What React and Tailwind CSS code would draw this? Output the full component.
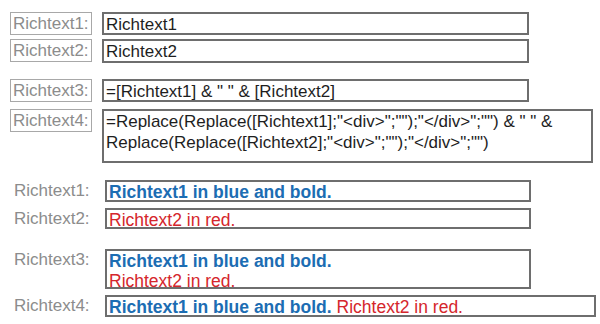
import React from 'react';

const font = { fontFamily: '"Liberation Sans", Arial, sans-serif' };

const TopRow = ({ label, children, fieldClass = 'w-[427px] h-[23px]', className = '' }) => (
  <div className={`flex items-start ${className}`}>
    <div className="w-[82px] h-[23px] border border-[#a8a8a8] text-[#8c8c8c] text-[17px] leading-[21px] pl-[2px] whitespace-nowrap">
      {label}
    </div>
    <div className={`ml-[10px] border-2 border-[#6e6e6e] text-[#1e1e1e] text-[17px] leading-[21px] pl-[2px] whitespace-nowrap ${fieldClass}`}>
      {children}
    </div>
  </div>
);

const BottomRow = ({ label, children, fieldClass = 'w-[426px] h-[22px]', className = '' }) => (
  <div className={`flex items-start ${className}`}>
    <div className="w-[95px] pl-[4px] text-[#8c8c8c] text-[17px] leading-[21px] whitespace-nowrap">{label}</div>
    <div className={`border-2 border-[#6e6e6e] text-[17.5px] leading-[20px] pl-[2px] whitespace-nowrap ${fieldClass}`}>
      {children}
    </div>
  </div>
);

const Blue = ({ children }) => <span className="font-bold text-[#1c6db3]">{children}</span>;
const Red = ({ children }) => <span className="text-[#d5262c]">{children}</span>;

export default function App() {
  return (
    <div className="w-[600px] h-[324px] bg-white pt-[12px] pl-[10px] overflow-hidden" style={font}>
      <TopRow label="Richtext1:">Richtext1</TopRow>
      <TopRow label="Richtext2:" className="mt-[4px]" fieldClass="w-[427px] h-[24px]">Richtext2</TopRow>
      <TopRow label="Richtext3:" className="mt-[16px]">=[Richtext1] &amp; " " &amp; [Richtext2]</TopRow>
      <TopRow label="Richtext4:" className="mt-[7px]" fieldClass="w-[491px] h-[54px]">
        =Replace(Replace([Richtext1];"&lt;div&gt;";"");"&lt;/div&gt;";"") &amp; " " &amp;
        <br />
        Replace(Replace([Richtext2];"&lt;div&gt;";"");"&lt;/div&gt;";"")
      </TopRow>

      <BottomRow label="Richtext1:" className="mt-[17px]">
        <Blue>Richtext1 in blue and bold.</Blue>
      </BottomRow>
      <BottomRow label="Richtext2:" className="mt-[6px]" fieldClass="w-[426px] h-[21px]">
        <Red>Richtext2 in red.</Red>
      </BottomRow>
      <BottomRow label="Richtext3:" className="mt-[20px]" fieldClass="w-[426px] h-[40px] leading-[18px]">
        <Blue>Richtext1 in blue and bold.</Blue>
        <br />
        <Red>Richtext2 in red.</Red>
      </BottomRow>
      <BottomRow label="Richtext4:" className="mt-[6px]" fieldClass="w-[491px] h-[22px]">
        <Blue>Richtext1 in blue and bold.</Blue> <Red>Richtext2 in red.</Red>
      </BottomRow>
    </div>
  );
}
